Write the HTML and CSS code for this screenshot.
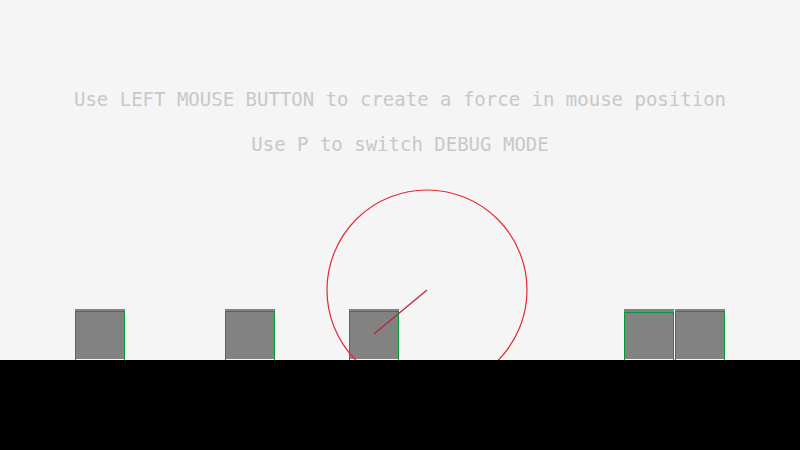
FILE: index.html
```html
<!DOCTYPE html>
<html>
<head>
<meta charset="utf-8">
<link rel="stylesheet" href="styles.css">
</head>
<body>
<div class="screen">
  <div class="field">
    <div class="notes">
      <p class="note">Use LEFT MOUSE BUTTON to create a force in mouse position</p>
      <p class="note">Use P to switch DEBUG MODE</p>
    </div>
    <svg class="bodies" width="800" height="360" viewBox="0 0 800 360" shape-rendering="crispEdges">
      <g class="fill">
        <rect x="75" y="309" width="50" height="50"/>
        <rect x="225" y="309" width="50" height="50"/>
        <rect x="349" y="309" width="50" height="50"/>
        <rect x="624" y="309" width="50" height="50"/>
        <rect x="675" y="309" width="50" height="50"/>
      </g>
      <g class="outline">
        <polyline points="75.5,360 75.5,311.5 124.5,311.5 124.5,360"/>
        <polyline points="225.5,360 225.5,311.5 274.5,311.5 274.5,360"/>
        <polyline points="349.5,360 349.5,311.5 398.5,311.5 398.5,360"/>
        <polyline points="624.5,360 624.5,312.5 673.5,312.5 673.5,360"/>
        <polyline points="675.5,360 675.5,311.5 724.5,311.5 724.5,360"/>
      </g>
      <circle class="force" cx="427" cy="290" r="100" shape-rendering="auto"/>
      <line class="ray" x1="427" y1="290" x2="374" y2="334" shape-rendering="auto"/>
    </svg>
  </div>
  <div class="ground"></div>
</div>
</body>
</html>
```

FILE: styles.css
```css
html, body {
  margin: 0;
  padding: 0;
  background: #f5f5f5;
}
.screen {
  width: 800px;
  height: 450px;
  display: flex;
  flex-direction: column;
  background: #f5f5f5;
  overflow: hidden;
}
.field {
  position: relative;
  height: 360px;
  overflow: hidden;
}
.notes {
  display: flex;
  flex-direction: column;
  align-items: center;
  gap: 25px;
  padding-top: 89px;
}
.note {
  margin: 0;
  height: 20px;
  line-height: 20px;
  font-family: "DejaVu Sans Mono", "Liberation Mono", monospace;
  font-size: 19px;
  color: #c8c8c8;
  white-space: nowrap;
}
.bodies {
  position: absolute;
  left: 0;
  top: 0;
}
.fill rect {
  fill: #828282;
}
.outline polyline {
  fill: none;
  stroke: #009a36;
  stroke-width: 1.4;
}
.force {
  fill: none;
  stroke: #e62937;
  stroke-width: 1.2;
}
.ray {
  stroke: #be2137;
  stroke-width: 1.2;
}
.ground {
  height: 90px;
  background: #000000;
}
```
